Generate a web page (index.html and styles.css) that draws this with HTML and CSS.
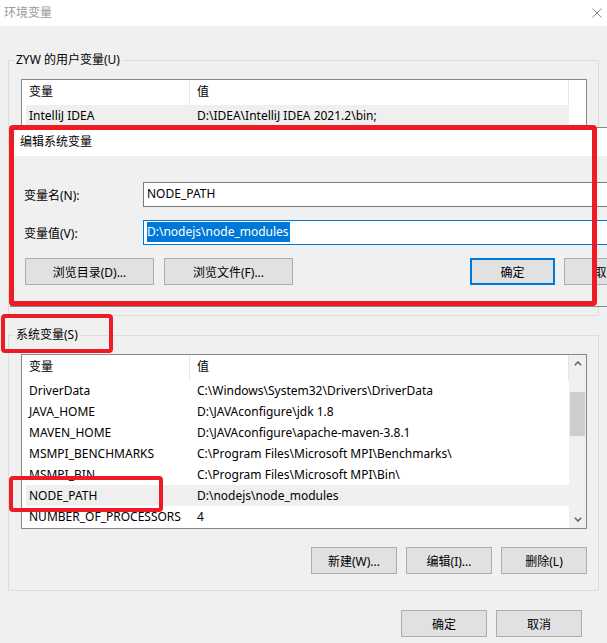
FILE: index.html
```html
<!DOCTYPE html>
<html lang="zh-CN">
<head>
<meta charset="utf-8">
<title>环境变量</title>
<link rel="stylesheet" href="styles.css">
</head>
<body>
<div class="window">
  <header class="titlebar">
    <span class="title">环境变量</span>
    <svg class="close" width="10" height="10" viewBox="0 0 10 10"><path d="M0.5 0.5L9.5 9.5M9.5 0.5L0.5 9.5" stroke="#8c8c8c" stroke-width="1" fill="none"/></svg>
  </header>
  <main class="content">
    <fieldset class="group">
      <legend>ZYW 的用户变量(U)</legend>
      <div class="group-inner">
        <div class="list">
          <div class="list-body">
            <div class="list-head"><span class="c1">变量</span><span class="c2">值</span></div>
            <div class="row hl"><span class="c1">IntelliJ IDEA</span><span class="c2">D:\IDEA\IntelliJ IDEA 2021.2\bin;</span></div>
          </div>
          <div class="scroll-blank"></div>
        </div>
        <div class="btns" aria-hidden="true">
          <button class="ghost"></button>
          <button class="ghost"></button>
          <button class="ghost"></button>
        </div>
      </div>
    </fieldset>

    <fieldset class="group sys">
      <legend>系统变量(S)</legend>
      <div class="group-inner">
        <div class="list">
          <div class="list-body">
            <div class="list-head"><span class="c1">变量</span><span class="c2">值</span></div>
            <div class="row"><span class="c1">DriverData</span><span class="c2">C:\Windows\System32\Drivers\DriverData</span></div>
            <div class="row"><span class="c1">JAVA_HOME</span><span class="c2">D:\JAVAconfigure\jdk 1.8</span></div>
            <div class="row"><span class="c1">MAVEN_HOME</span><span class="c2">D:\JAVAconfigure\apache-maven-3.8.1</span></div>
            <div class="row"><span class="c1">MSMPI_BENCHMARKS</span><span class="c2">C:\Program Files\Microsoft MPI\Benchmarks\</span></div>
            <div class="row"><span class="c1">MSMPI_BIN</span><span class="c2">C:\Program Files\Microsoft MPI\Bin\</span></div>
            <div class="row hl"><span class="c1">NODE_PATH</span><span class="c2">D:\nodejs\node_modules</span></div>
            <div class="row"><span class="c1">NUMBER_OF_PROCESSORS</span><span class="c2">4</span></div>
          </div>
          <div class="vscroll">
            <div class="arrow"><svg width="8" height="5" viewBox="0 0 8 5"><path d="M0.8 4.2L4 1L7.2 4.2" stroke="#606060" stroke-width="1.5" fill="none"/></svg></div>
            <div class="thumb"></div>
            <div class="arrow down"><svg width="8" height="5" viewBox="0 0 8 5"><path d="M0.8 0.8L4 4L7.2 0.8" stroke="#606060" stroke-width="1.5" fill="none"/></svg></div>
          </div>
        </div>
        <div class="btns">
          <button>新建(W)...</button>
          <button>编辑(I)...</button>
          <button>删除(L)</button>
        </div>
      </div>
    </fieldset>

    <div class="footer">
      <button>确定</button>
      <button>取消</button>
    </div>
  </main>

  <div class="dialog">
    <div class="dlg-title">编辑系统变量</div>
    <div class="dlg-body">
      <div class="field"><label class="field-label">变量名(N):</label><div class="input">NODE_PATH</div></div>
      <div class="field"><label class="field-label">变量值(V):</label><div class="input focus"><span class="sel">D:\nodejs\node_modules</span></div></div>
      <div class="dlg-btns">
        <div class="dlg-left">
          <button class="wide">浏览目录(D)...</button>
          <button class="wide">浏览文件(F)...</button>
        </div>
        <div class="dlg-right">
          <button class="default">确定</button>
          <button>取消</button>
        </div>
      </div>
    </div>
  </div>

  <div class="mark mark-dialog"></div>
  <div class="mark mark-sys"></div>
  <div class="mark mark-node"></div>
</div>
</body>
</html>
```

FILE: styles.css
```css
* { box-sizing: border-box; }
html, body { margin: 0; padding: 0; }
body {
  width: 607px;
  height: 643px;
  overflow: hidden;
  background: #f0f0f0;
  font-family: "Noto Sans", "Noto Sans CJK SC", sans-serif;
  font-size: 12px;
  color: #000;
}
.window { position: relative; width: 607px; height: 643px; overflow: hidden; }

.titlebar {
  height: 26px;
  background: #fff;
  display: flex;
  align-items: center;
  justify-content: space-between;
  padding: 0 5px 0 4px;
}
.title { color: #9a9a9a; line-height: 16px; }
.close { display: block; margin-top: -1px; }

.content { padding: 26px 8px 0; }

.group {
  margin: 0;
  padding: 0;
  border: 1px solid #dcdcdc;
  min-width: 0;
}
.group legend {
  margin-left: 5px;
  padding: 0 2px;
  line-height: 16px;
}
.group.sys { margin-top: 11px; }
.group-inner { padding: 11px 11px 16px 12px; }

.list {
  display: flex;
  height: 175px;
  border: 1px solid #828790;
  background: #fff;
}
.list-body { flex: 1; overflow: hidden; min-width: 0; }
.list-head { display: flex; height: 25px; line-height: 24px; }
.list-head .c1 { width: 168px; padding-left: 7px; border-right: 1px solid #e5e5e5; }
.list-head .c2 { flex: 1; padding-left: 7px; border-right: 1px solid #e5e5e5; }
.row { display: flex; height: 21px; line-height: 21px; margin-left: 4px; white-space: nowrap; }
.row .c1 { width: 164px; padding-left: 3px; overflow: hidden; flex: none; }
.row .c2 { padding-left: 7px; }
.row.hl { background: #efefef; }

.scroll-blank { width: 17px; background: #fff; }
.vscroll {
  width: 17px;
  background: #f0f0f0;
  display: flex;
  flex-direction: column;
  align-items: center;
}
.arrow { width: 17px; height: 17px; display: flex; align-items: center; justify-content: center; }
.arrow.down { margin-top: auto; }
.thumb { width: 15px; height: 44px; margin-top: 20px; background: #cdcdcd; }

.btns { display: flex; justify-content: flex-end; gap: 9px; margin-top: 18px; }

button {
  font: inherit;
  color: #000;
  width: 86px;
  height: 27px;
  padding: 0;
  background: #e1e1e1;
  border: 1px solid #adadad;
  border-radius: 0;
}

.footer { display: flex; justify-content: flex-end; gap: 9px; margin-top: 19px; padding-right: 17px; }

/* Edit dialog overlay */
.dialog {
  position: absolute;
  left: 10px;
  top: 127px;
  width: 680px;
  height: 180px;
  background: #f0f0f0;
  border: 1px solid #8a8a8a;
}
.dlg-title {
  height: 28px;
  background: #fff;
  padding-left: 9px;
  line-height: 28px;
}
.dlg-body { padding: 26px 0 0 13px; }
.field { display: flex; align-items: center; height: 25px; margin-bottom: 13px; }
.field-label { width: 119px; flex: none; }
.input {
  width: 500px;
  height: 25px;
  background: #fff;
  border: 1px solid #7a7a7a;
  padding-left: 3px;
  line-height: 22px;
  white-space: nowrap;
}
.input.focus { border-color: #0078d7; }
.sel { background: #0078d7; color: #fff; display: inline-block; line-height: 20px; padding: 0 1px 0 0; }
.dlg-btns { display: flex; margin-top: 5px; padding-left: 1px; }
.dlg-left { display: flex; gap: 10px; }
.dlg-left .wide { width: 129px; }
.dlg-right { display: flex; gap: 9px; margin-left: 177px; }
.dlg-right button { width: 85px; }
.dlg-right .default { border: 2px solid #0078d7; }

/* Red annotation rectangles */
.mark {
  position: absolute;
  border: 4px solid #ed1c24;
  border-radius: 4px;
}
.mark-dialog { left: 9px; top: 125px; width: 588px; height: 181px; border-width: 5px; }
.mark-sys { left: 1px; top: 314px; width: 112px; height: 39px; }
.mark-node { left: 9px; top: 476px; width: 154px; height: 36px; }
```
